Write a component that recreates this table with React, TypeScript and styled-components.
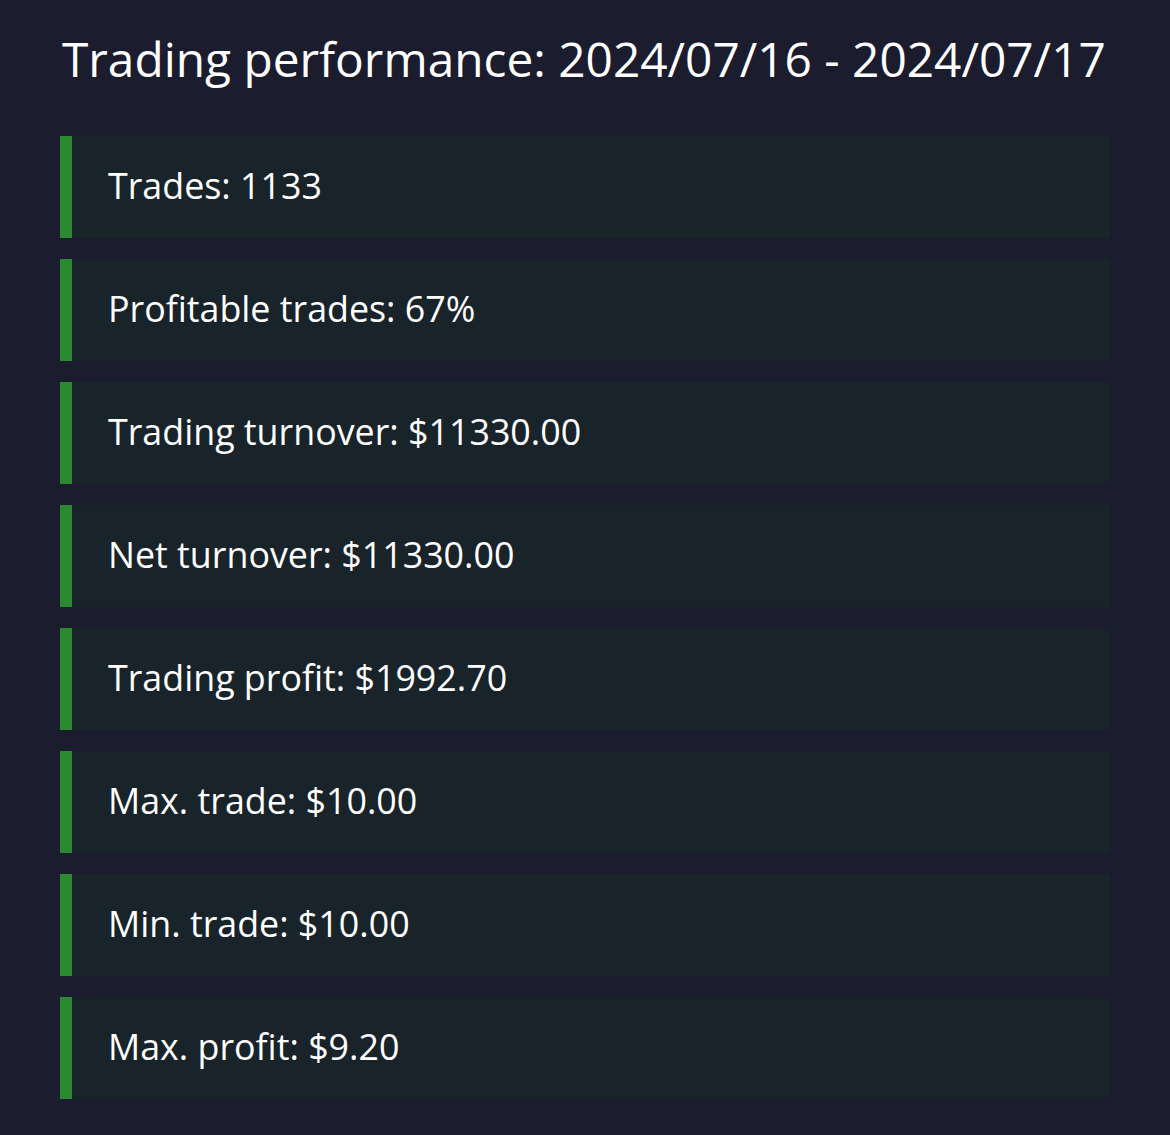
import styled, { createGlobalStyle } from "styled-components";

const GlobalStyle = createGlobalStyle`
  html, body {
    margin: 0;
    padding: 0;
    background: #1b1d2e;
  }
  body {
    font-family: "Open Sans", "Noto Sans", sans-serif;
    color: #ffffff;
  }
`;

const Page = styled.div`
  min-height: 1135px;
  padding: 26px 60px 0 60px;
  box-sizing: border-box;
`;

const Title = styled.h1`
  margin: 0 0 45px 2px;
  font-size: 47.8px;
  font-weight: 400;
  line-height: 65px;
  white-space: nowrap;
`;

const StatList = styled.div`
  display: flex;
  flex-direction: column;
  gap: 21px;
  width: 1050px;
`;

const StatRow = styled.div<{ accent?: string }>`
  display: flex;
  align-items: center;
  height: 102px;
  background: #19232a;
  border-left: 12px solid ${({ accent }) => accent || "#2a8a30"};
  padding: 0 0 4px 36px;
  box-sizing: border-box;
  font-size: 35.8px;
  white-space: nowrap;
`;

const stats = [
  "Trades: 1133",
  "Profitable trades: 67%",
  "Trading turnover: $11330.00",
  "Net turnover: $11330.00",
  "Trading profit: $1992.70",
  "Max. trade: $10.00",
  "Min. trade: $10.00",
  "Max. profit: $9.20",
];

const App: React.FC = () => {
  return (
    <>
      <GlobalStyle />
      <Page>
        <Title>Trading performance: 2024/07/16 - 2024/07/17</Title>
        <StatList>
          {stats.map((stat, i) => (
            <StatRow key={`stat-row-${i}`}>{stat}</StatRow>
          ))}
        </StatList>
      </Page>
    </>
  );
};

export default App;
